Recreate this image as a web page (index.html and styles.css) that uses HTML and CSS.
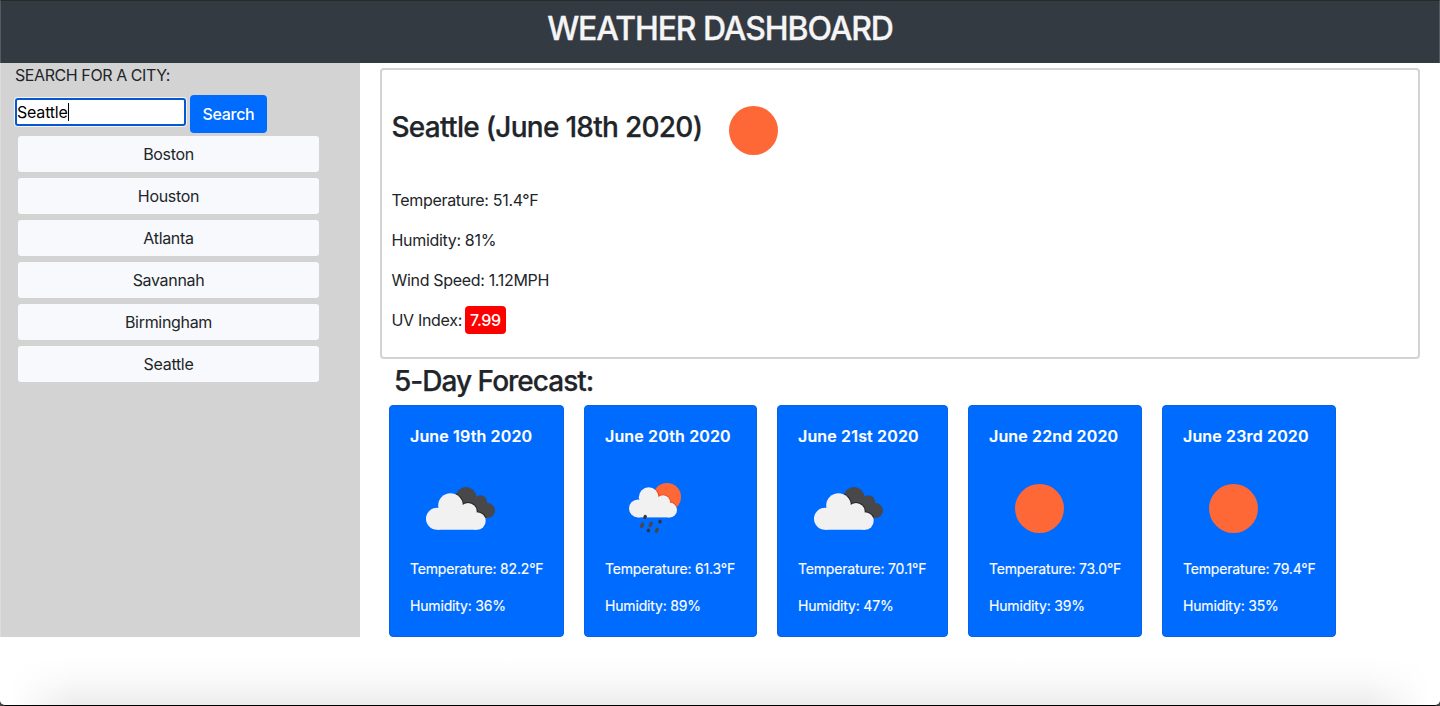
FILE: index.html
```html
<!DOCTYPE html>
<html lang="en">
<head>
<meta charset="utf-8">
<title>Weather Dashboard</title>
<link rel="stylesheet" href="styles.css">
</head>
<body>
<svg class="defs" width="0" height="0" aria-hidden="true">
  <clipPath id="back-cloud">
    <circle cx="51" cy="22.500" r="10.500"/><circle cx="65.500" cy="27" r="6.700"/><circle cx="72.500" cy="35.500" r="7.600"/><path d="M42 22H60L72 28V43H56Z"/>
  </clipPath>
  <clipPath id="sun-disc"><circle cx="52" cy="22" r="14"/></clipPath>
  <symbol id="clouds" viewBox="0 0 90 65">
    <g clip-path="url(#back-cloud)">
      <path fill="#48484a" d="M30 5h55v50H30z"/>
      <g fill="#252629"><circle cx="35.500" cy="30.500" r="13.300"/><circle cx="53" cy="36.700" r="9.700"/><circle cx="62" cy="46" r="9.800"/></g>
    </g>
    <g fill="#f1f1f1"><circle cx="35.500" cy="30.500" r="12.300"/><circle cx="22" cy="43.700" r="11"/><circle cx="53" cy="36.700" r="8.700"/><circle cx="62" cy="46" r="8.700"/><path d="M22 38h40v16.700H22z"/></g>
  </symbol>
  <symbol id="rain" viewBox="0 0 90 65">
    <g clip-path="url(#sun-disc)">
      <path fill="#fd6836" d="M35 5h35v35H35z"/>
      <g fill="#ef3f16"><circle cx="33.700" cy="22.200" r="10.800"/><circle cx="48" cy="27.200" r="7.800"/><circle cx="54.500" cy="35" r="8.300"/></g>
    </g>
    <g fill="#f1f1f1"><circle cx="33.700" cy="22.200" r="9.900"/><circle cx="23" cy="33.400" r="9"/><circle cx="48" cy="27.200" r="7"/><circle cx="54.500" cy="35" r="7.500"/><path d="M23 28h31.500v14.400H23z"/></g>
    <path fill="none" stroke="#48484a" stroke-width="3.500" stroke-linecap="round" d="M27.600 49.300l-.9 2M36.200 48.200l-.9 2.200M42.200 54.500l-.8 1.800"/>
    <path fill="none" stroke="#35363a" stroke-width="3.300" stroke-linecap="round" d="M30.300 41.500l-.4.900M45.200 46.300l-.3.500M33.500 55.300l-.2.400"/>
  </symbol>
</svg>
<div class="window">
  <header class="topbar"><h1>WEATHER DASHBOARD</h1></header>
  <div class="layout">
    <aside class="sidebar">
      <p class="label">SEARCH FOR A CITY:</p>
      <div class="search">
        <div class="field"><span>Seattle</span><i class="caret"></i></div>
        <button class="btn">Search</button>
      </div>
      <div class="cities">
        <button>Boston</button>
        <button>Houston</button>
        <button>Atlanta</button>
        <button>Savannah</button>
        <button>Birmingham</button>
        <button>Seattle</button>
      </div>
    </aside>
    <main class="main">
      <section class="current">
        <div class="heading"><h2>Seattle (June 18th 2020)</h2><span class="sun"></span></div>
        <p>Temperature: 51.4°F</p>
        <p>Humidity: 81%</p>
        <p>Wind Speed: 1.12MPH</p>
        <p>UV Index: <span class="uv">7.99</span></p>
      </section>
      <h2 class="forecast-title">5-Day Forecast:</h2>
      <section class="cards">
        <article class="card"><h3>June 19th 2020</h3><div class="icon"><svg><use href="#clouds"/></svg></div><p>Temperature: 82.2°F</p><p>Humidity: 36%</p></article>
        <article class="card"><h3>June 20th 2020</h3><div class="icon icon-rain"><svg><use href="#rain"/></svg></div><p>Temperature: 61.3°F</p><p>Humidity: 89%</p></article>
        <article class="card"><h3>June 21st 2020</h3><div class="icon"><svg><use href="#clouds"/></svg></div><p>Temperature: 70.1°F</p><p>Humidity: 47%</p></article>
        <article class="card"><h3>June 22nd 2020</h3><div class="icon"><span class="sun"></span></div><p>Temperature: 73.0°F</p><p>Humidity: 39%</p></article>
        <article class="card"><h3>June 23rd 2020</h3><div class="icon"><span class="sun"></span></div><p>Temperature: 79.4°F</p><p>Humidity: 35%</p></article>
      </section>
    </main>
  </div>
  <div class="dock-shadow"></div>
</div>
</body>
</html>
```
FILE: styles.css
```css
* { box-sizing: border-box; }
html { background: #444; }
body { margin: 0; font: 16px/24px Inter, "Liberation Sans", sans-serif; color: #212529; letter-spacing: -0.32px; }
h1, h2, h3, p { margin: 0; white-space: nowrap; }
button { font: inherit; letter-spacing: inherit; border: 0; padding: 0; }
.defs { position: absolute; }
.window { height: 706px; background: #fff; border-bottom: 1px solid #000; border-radius: 0 0 5px 5px; overflow: hidden; display: flex; flex-direction: column; }
.topbar { height: 63px; flex: none; background: #343a42; border-top: 1px solid #29292a; border-left: 1px solid #555b61; border-right: 1px solid #555b61; text-align: center; padding-top: 9px; }
h1 { font-size: 32px; line-height: 38px; font-weight: 500; color: #f5f5f5; letter-spacing: -1.1px; -webkit-text-stroke: 0.3px; }
.layout { display: flex; height: 574px; flex: none; }
.sidebar { width: 360px; background: #d3d3d3; border-left: 1px solid #dcdcdc; padding-left: 14px; }
.label { letter-spacing: -0.42px; }
.search { display: flex; gap: 4px; margin-top: 8px; height: 38px; }
.field { width: 171px; height: 28px; margin-top: 3px; border: 2px solid #0657d0; border-radius: 3px; background: #fff; color: #000; box-shadow: 0 0 0 1px #f0f2f5; display: flex; align-items: center; letter-spacing: -0.2px; }
.caret { width: 1px; height: 18px; background: #000; }
.btn { width: 77px; height: 38px; border-radius: 4px; background: #006bff; color: #fff; font-weight: 500; }
.cities { margin: 3px 0 0 3px; width: 301px; display: grid; gap: 6px; }
.cities button { height: 36px; border-radius: 3px; background: #f8f9fc; color: #212529; }
.main { flex: 1; padding: 5px 20px 0; }
.current { height: 291px; border: 2px solid #d3d3d3; border-radius: 4px; padding: 10px 0 0 9.500px; }
.heading { display: flex; gap: 27px; height: 100px; align-items: center; }
h2 { font-size: 28px; line-height: 34px; font-weight: 500; letter-spacing: -0.72px; -webkit-text-stroke: 0.25px; }
.heading h2 { margin-bottom: 7px; }
.sun { display: block; width: 49px; height: 49px; border-radius: 50%; background: #fd6836; }
.current p { height: 24px; margin: 8px 0 16px; }
.uv { background: #f00; color: #fff; font-weight: 500; border-radius: 4px; padding: 4px 5px; margin-left: -1px; }
.forecast-title { margin: 5px 0 7px 14px; letter-spacing: -0.98px; }
.cards { display: grid; grid-template-columns: 175px 173px 171px 174px 174px; gap: 20px; margin-left: 9px; }
.card { height: 232px; border: 1px solid #0763e0; border-radius: 4px; background: #006bff; color: #fff; padding: 19px 20px; font-size: 14px; line-height: 21px; letter-spacing: -0.17px; -webkit-text-stroke: 0.15px; }
h3 { font-size: 16px; line-height: 22px; font-weight: 600; letter-spacing: 0.15px; }
.icon { width: 100px; height: 100px; margin: 11px 0 0; display: flex; align-items: center; justify-content: center; }
.icon svg { width: 90px; height: 65px; flex: none; margin-bottom: 2px; }
.icon-rain { padding-left: 10px; }
.card p { height: 21px; margin-bottom: 16px; }
.dock-shadow { flex: 1; background: linear-gradient(#fff 30%, #f9f9f9 65%, #ececec); mask-image: linear-gradient(90deg, transparent 10px, #000 75px, #000 calc(100% - 75px), transparent calc(100% - 10px)); }
```
